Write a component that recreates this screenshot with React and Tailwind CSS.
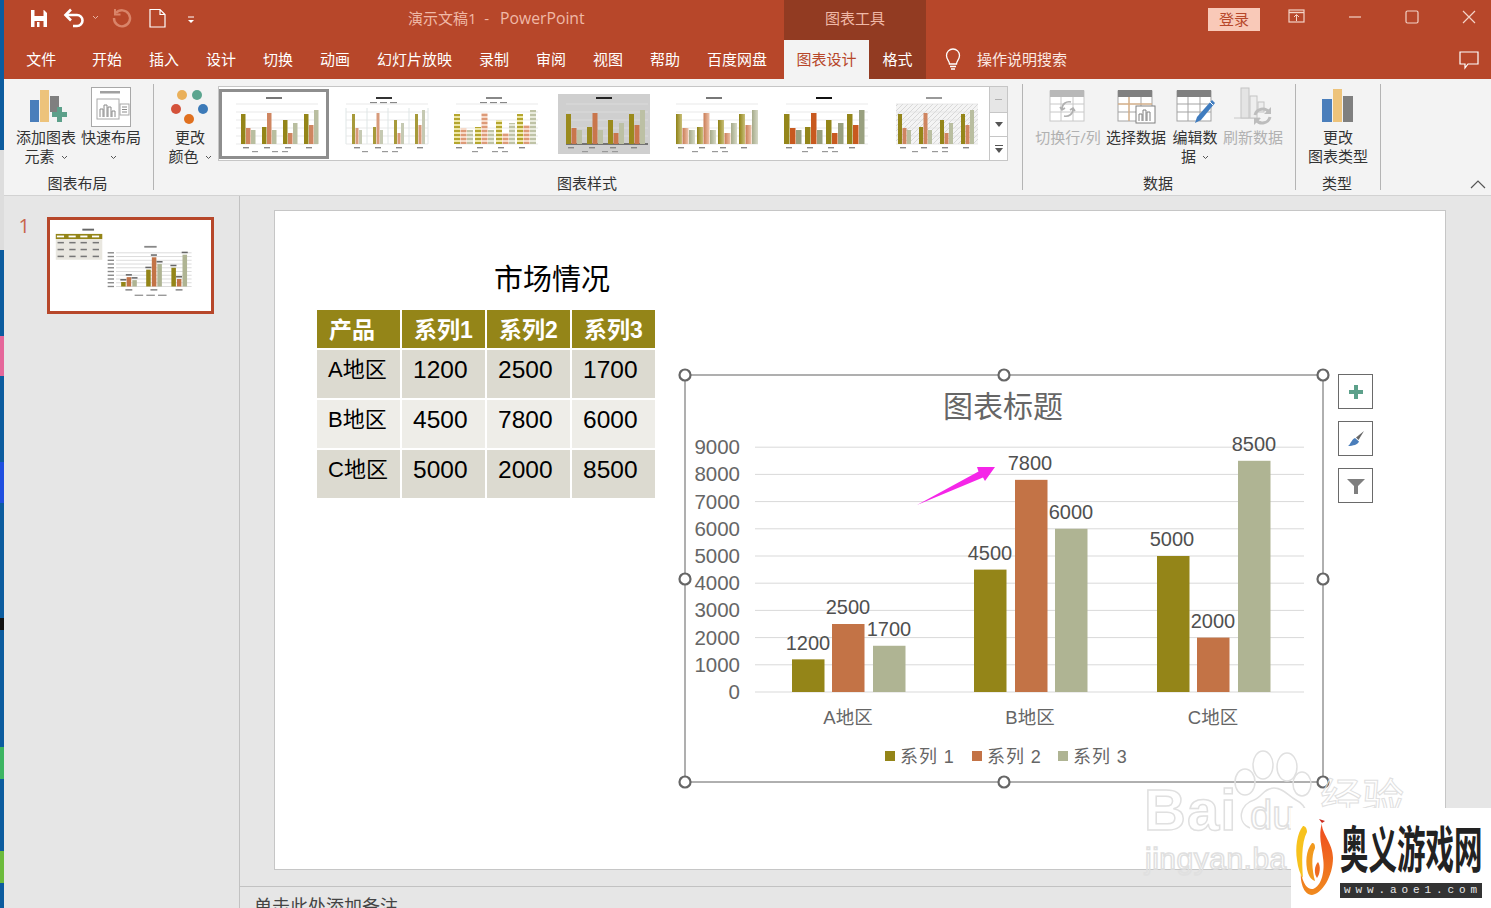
import React from "react";

const OLIVE = "#948518";
const RUST = "#c37346";
const SAGE = "#afb493";

const TABS = [
  { label: "开始", w: "w-[57px]" },
  { label: "插入", w: "w-[57px]" },
  { label: "设计", w: "w-[57px]" },
  { label: "切换", w: "w-[57px]" },
  { label: "动画", w: "w-[57px]" },
  { label: "幻灯片放映", w: "w-[102px]" },
  { label: "录制", w: "w-[57px]" },
  { label: "审阅", w: "w-[57px]" },
  { label: "视图", w: "w-[57px]" },
  { label: "帮助", w: "w-[57px]" },
  { label: "百度网盘", w: "w-[87px]" },
];

const TABLE = [
  ["A地区", "1200", "2500", "1700"],
  ["B地区", "4500", "7800", "6000"],
  ["C地区", "5000", "2000", "8500"],
];

// x of each bar in slide pixels
const BARS = [
  { x: 792, v: 1200, c: OLIVE, lx: 808, ly: 650 },
  { x: 832, v: 2500, c: RUST, lx: 848, ly: 614 },
  { x: 873, v: 1700, c: SAGE, lx: 889, ly: 636 },
  { x: 974, v: 4500, c: OLIVE, lx: 990, ly: 560 },
  { x: 1015, v: 7800, c: RUST, lx: 1030, ly: 470 },
  { x: 1055, v: 6000, c: SAGE, lx: 1071, ly: 519 },
  { x: 1157, v: 5000, c: OLIVE, lx: 1172, ly: 546 },
  { x: 1197, v: 2000, c: RUST, lx: 1213, ly: 628 },
  { x: 1238, v: 8500, c: SAGE, lx: 1254, ly: 451 },
];
const TICKS = [9000, 8000, 7000, 6000, 5000, 4000, 3000, 2000, 1000, 0];
const valueY = (v) => 692 - v * 0.0272;

const HANDLES = [
  [685, 375], [1004, 375], [1323, 375], [685, 579],
  [1323, 579], [685, 782], [1004, 782], [1323, 782],
];

const STYLE_THUMBS = [
  { selected: true, colors: [OLIVE, "#cf8560", "#b9bea0"], w: 4.5, start: 13, title: "#777" },
  { colors: ["#a79a3a", "#d79a7a", "#c5c9b2"], w: 3, start: 14, title: "#333", columns: true, legend: true },
  { kind: "stripe", w: 6, start: 6, title: "#888", legend: true },
  { colors: ["#9a8a1d", "#c9764c", "#bcc0a4"], w: 5, start: 8, title: "#222", bg: "#cfcfcf", axis: "#555" },
  { kind: "grad", w: 6, start: 8, title: "#777" },
  { colors: ["#94861a", "#c8591f", "#99a07f"], w: 5.5, start: 6, title: "#111" },
  { colors: ["#94861a", "#cf8560", "#b9bea0"], w: 4, start: 10, title: "#999", hatch: true },
];
const THUMB_H = [
  [30, 16, 14],
  [17, 31, 14],
  [24, 11, 21],
  [30, 19, 34],
];

function thumbFill(t, b, id) {
  if (t.kind === "stripe") {
    return [`url(#stripeA${id})`, `url(#stripeB${id})`, `url(#stripeC${id})`][b];
  }
  if (t.kind === "grad") {
    return [`url(#gradA${id})`, `url(#gradB${id})`, `url(#gradC${id})`][b];
  }
  return t.colors[b];
}

function StyleThumb({ t, id }) {
  return (
    <div
      className={[
        "w-[110px] h-[70px] flex items-center justify-center",
        t.selected ? "border-[3px] border-[#8e8e8e]" : "",
      ].join(" ")}
    >
      <svg width="92" height="60" viewBox="0 0 92 60">
        <defs>
          {[["A", "#b5a62e", "#eee7a8"], ["B", "#dd9a78", "#f6d9c8"], ["C", "#bfc3a6", "#e8eadc"]].map(([k, a, b]) => (
            <pattern key={k} id={`stripe${k}${id}`} width="4" height="4" patternUnits="userSpaceOnUse">
              <rect width="4" height="2" fill={a} />
              <rect y="2" width="4" height="2" fill={b} />
            </pattern>
          ))}
          {[["A", "#8f8216", "#c9c07a"], ["B", "#c97c55", "#eec3ab"], ["C", "#a5aa8a", "#d6d9c6"]].map(([k, a, b]) => (
            <linearGradient key={k} id={`grad${k}${id}`} x1="0" x2="1" y1="0" y2="0">
              <stop offset="0" stopColor={a} />
              <stop offset="1" stopColor={b} />
            </linearGradient>
          ))}
          <pattern id={`hatch${id}`} width="5" height="5" patternUnits="userSpaceOnUse">
            <rect width="5" height="5" fill="#f4f4f4" />
            <path d="M0 5L5 0" stroke="#d8d8d8" strokeWidth="1" />
          </pattern>
        </defs>
        <rect width="92" height="60" fill={t.bg || "#fff"} />
        {t.hatch && <rect x="8" y="10" width="82" height="40" fill={`url(#hatch${id})`} />}
        <rect x="38" y="3" width="16" height="2" fill={t.title} />
        {t.legend && [32, 42, 52].map((x) => <rect key={x} x={x} y="8" width="7" height="1.2" fill="#888" />)}
        {[10, 18, 26, 34, 42, 50].map((y) => (
          <line
            key={y}
            x1="8"
            x2="90"
            y1={y}
            y2={y}
            stroke={t.axis && y === 50 ? t.axis : "#e0e0e0"}
            strokeWidth={t.axis && y === 50 ? 1.5 : 0.7}
          />
        ))}
        {t.columns && [8, 29, 50, 71, 90].map((x) => (
          <line key={x} x1={x} x2={x} y1="14" y2="50" stroke="#dfe6e6" strokeWidth="1" />
        ))}
        {THUMB_H.map((group, g) =>
          group.map((h, b) => (
            <rect
              key={`${g}-${b}`}
              x={t.start + g * 21 + b * (t.w + 0.5)}
              y={50 - h}
              width={t.w}
              height={h}
              fill={thumbFill(t, b, id)}
            />
          ))
        )}
        {[0, 1, 2, 3].map((g) => (
          <rect key={g} x={t.start + 2 + g * 21} y="53" width="6" height="1.4" fill="#888" />
        ))}
        {[24, 44, 54].map((x) => <rect key={x} x={x} y="57" width="6" height="1.2" fill="#999" />)}
      </svg>
    </div>
  );
}

function RibbonButton({ w, disabled, icon, children }) {
  return (
    <div className={`${w} shrink-0 flex flex-col items-center pt-[7px]`}>
      <div className="h-[42px] w-full flex items-start justify-center">{icon}</div>
      <div
        className={`text-[15px] leading-[19px] text-center whitespace-nowrap ${
          disabled ? "text-[#b1b1b1]" : "text-[#333333]"
        }`}
      >
        {children}
      </div>
    </div>
  );
}

const Caret = () => (
  <svg width="7" height="5" viewBox="0 0 7 5" className="inline-block ml-[6px] align-middle">
    <path d="M1 1l2.5 2.5L6 1" fill="none" stroke="#555" strokeWidth="1" />
  </svg>
);

function GroupLabel({ children }) {
  return <div className="h-[18px] pr-[2px] text-[15px] leading-[18px] text-center text-[#333333]">{children}</div>;
}

const Divider = () => <div className="w-px my-[5px] bg-[#b4b4b4] shrink-0" />;

function BarsIcon() {
  return (
    <svg width="40" height="40" viewBox="0 0 40 40">
      <rect x="1" y="13" width="9" height="22" fill="#4a7ebb" />
      <rect x="11" y="3" width="9" height="32" fill="#edc37b" />
      <rect x="21" y="9" width="9" height="16" fill="#7f7f7f" />
      <path d="M24 24h5v-5h5v5h5v5h-5v5h-5v-5h-5z" fill="#5ca08a" transform="translate(-1 1)" />
    </svg>
  );
}

function QuickLayoutIcon() {
  return (
    <svg width="42" height="42" viewBox="0 0 42 42">
      <rect x="1.5" y="1.5" width="39" height="39" fill="#fff" stroke="#a8a8a8" />
      <rect x="10" y="5" width="20" height="2.5" fill="#a0a0a0" />
      <rect x="7" y="13" width="22" height="20" fill="#fff" stroke="#a8a8a8" />
      <path d="M10 31V23h3v8M14 31V19h3v12M18 31V21h3v10M22 31v-6h3v6" fill="#fff" stroke="#8a8a8a" />
      <rect x="30" y="18" width="9" height="11" fill="#fff" stroke="#a8a8a8" />
      <path d="M32 21h5M32 23.5h5M32 26h5" stroke="#8a8a8a" />
    </svg>
  );
}

function ColorsIcon() {
  return (
    <svg width="40" height="40" viewBox="0 0 40 40">
      <circle cx="12" cy="8" r="5" fill="#eab05a" />
      <circle cx="27" cy="8" r="5" fill="#5ba58f" />
      <circle cx="6" cy="22" r="5" fill="#d4523a" />
      <circle cx="33" cy="22" r="5" fill="#3c7ab8" />
      <circle cx="19" cy="32" r="5" fill="#e0701f" />
    </svg>
  );
}

function GridIcon({ tone, header, children }) {
  return (
    <svg width="42" height="40" viewBox="0 0 42 40">
      <rect x="3" y="5" width="34" height="30" fill="#fff" stroke={tone} />
      <rect x="3" y="4" width="34" height="7" fill={header} />
      <path d="M14 11v24M26 11v24M3 18h34M3 26h34" stroke={tone} strokeWidth="1" />
      {children}
    </svg>
  );
}

function SwitchIcon() {
  return (
    <GridIcon tone="#c8c8c8" header="#b8b8b8">
      <path d="M24 16c-5-1-9 2-9 7M13 21l2 3 3-2M17 30c5 1 9-2 9-7M28 25l-2-3-3 2" fill="none" stroke="#b0b0b0" strokeWidth="1.6" />
    </GridIcon>
  );
}

function SelectIcon() {
  return (
    <GridIcon tone="#a3a3a3" header="#808080">
      <path d="M14 11v24M3 18h34" stroke="#e8b27a" strokeWidth="1" />
      <rect x="21" y="20" width="19" height="17" fill="#fff" stroke="#808080" />
      <path d="M24 35v-7h3v7M28 35V24h3v11M32 35v-9h3v9" fill="#fff" stroke="#808080" />
    </GridIcon>
  );
}

function EditIcon() {
  return (
    <GridIcon tone="#a3a3a3" header="#808080">
      <path d="M38 14l3 3-14 17-6 3 2-6z" fill="#3f7cbf" />
      <path d="M36 16l3 3" stroke="#fff" strokeWidth="1" />
    </GridIcon>
  );
}

function RefreshIcon() {
  return (
    <svg width="42" height="40" viewBox="0 0 42 40">
      <path d="M2 32h26" stroke="#c8c8c8" />
      <rect x="9" y="2" width="8" height="30" fill="#e4e4e4" stroke="#c4c4c4" />
      <rect x="18" y="10" width="7" height="22" fill="#eeeeee" stroke="#c4c4c4" />
      <rect x="26" y="16" width="6" height="10" fill="#eeeeee" stroke="#c4c4c4" />
      <path d="M23 29a8 8 0 0 1 14-3M38 31a8 8 0 0 1-14 3" fill="none" stroke="#bdbdbd" strokeWidth="3" />
      <path d="M39 21v7h-7zM22 39v-7h7z" fill="#bdbdbd" />
    </svg>
  );
}

function ChartTypeIcon() {
  return (
    <svg width="34" height="36" viewBox="0 0 34 36">
      <rect x="1" y="11" width="10" height="23" fill="#4a7ebb" />
      <rect x="12" y="1" width="9" height="33" fill="#edc37b" />
      <rect x="22" y="8" width="10" height="26" fill="#7f7f7f" />
    </svg>
  );
}

function TitleBar() {
  return (
    <div className="h-10 flex items-start text-[15px] relative shrink-0">
      <div className="w-[780px] h-10 flex items-center">
        <svg width="205" height="24" viewBox="0 0 205 24" className="ml-[20px] mb-[4px] shrink-0">
          {/* save */}
          <path d="M7 4h13l3 3v14H7z" fill="#fff" />
          <rect x="10.5" y="4" width="9" height="6" fill="#b7472a" />
          <rect x="10.5" y="15" width="9" height="6" fill="#b7472a" />
          <rect x="13" y="16" width="2.5" height="5" fill="#fff" />
          {/* undo */}
          <path d="M43 9h10a5.5 5.5 0 0 1 0 11h-4" fill="none" stroke="#fff" strokeWidth="2.6" />
          <path d="M47 3.5L41.5 9l5.5 5.5" fill="none" stroke="#fff" strokeWidth="2.6" />
          <path d="M69 10l2.5 2.5L74 10" fill="none" stroke="#e9b3a2" strokeWidth="1" />
          {/* redo, disabled */}
          <path d="M92 7A8 8 0 1 1 90 12" fill="none" stroke="#d98469" strokeWidth="2.4" />
          <path d="M91 3v5.500h5.500" fill="none" stroke="#d98469" strokeWidth="2" />
          {/* new */}
          <path d="M126 3.500h10l5 5V21h-15zM136 3.500v5h5" fill="none" stroke="#fff" strokeWidth="1.2" />
          {/* customize */}
          <path d="M164 11h6" stroke="#fff" strokeWidth="1" />
          <path d="M164 14h6l-3 3z" fill="#fff" />
        </svg>
        <div className="ml-[179px] mb-[2px] whitespace-nowrap text-[#f0b9a7]">
          演示文稿1&nbsp; -&nbsp; <span className="ml-[3px] text-[15.750px]">PowerPoint</span>
        </div>
      </div>
      <div className="w-[142px] h-10 bg-[#923b22] text-[#f0b9a7] flex items-center justify-center pb-[3px]">图表工具</div>
      <div className="ml-[282px] mt-2 w-[52px] h-[23px] bg-[#f9c9b8] text-[#b7472a] flex items-center justify-center">登录</div>
      <svg width="231" height="24" viewBox="0 0 231 24" className="mt-[5px]">
        <rect x="29" y="5" width="15" height="12" fill="none" stroke="#f4d3c7" strokeWidth="1.2" />
        <path d="M29 7.5h15" stroke="#f4d3c7" strokeWidth="1.4" />
        <path d="M36.5 16v-6M34 12l2.5-2.5L39 12" fill="none" stroke="#f4d3c7" />
        <path d="M89 12h12" stroke="#f4d3c7" strokeWidth="1.2" />
        <rect x="146" y="6" width="12" height="12" rx="1.5" fill="none" stroke="#f4d3c7" strokeWidth="1.2" />
        <path d="M203 6l12 12M215 6l-12 12" stroke="#f4d3c7" strokeWidth="1.2" />
      </svg>
    </div>
  );
}

function TabBar() {
  return (
    <div className="h-[39px] flex items-stretch text-[15px] text-white shrink-0">
      <div className="w-[74.5px] flex items-center justify-center">文件</div>
      {TABS.map((t) => (
        <div key={t.label} className={`${t.w} flex items-center justify-center`}>
          {t.label}
        </div>
      ))}
      <div className="w-[3.5px]" />
      <div className="w-[85px] bg-[#f3f3f3] text-[#b7472a] flex items-center justify-center">图表设计</div>
      <div className="w-[57px] bg-[#923b22] flex items-center justify-center">格式</div>
      <div className="flex items-center ml-[17px] text-[#fbe9e3]">
        <svg width="20" height="24" viewBox="0 0 20 24" className="mr-[14px]">
          <path d="M6.5 16c0-3-3-4.500-3-8.500a6.500 6.500 0 0 1 13 0c0 4-3 5.500-3 8.500z" fill="none" stroke="#fff" strokeWidth="1.3" />
          <path d="M7 18.500h6M8 21h4" stroke="#fff" strokeWidth="1.3" />
        </svg>
        操作说明搜索
      </div>
      <svg width="22" height="22" viewBox="0 0 22 22" className="ml-auto mr-[11px] self-center">
        <path d="M2 3h18v12H10l-3 4v-4H2z" fill="none" stroke="#fff" strokeWidth="1.2" />
      </svg>
    </div>
  );
}

function Gallery() {
  return (
    <div className="w-[790px] h-[75px] mt-[7px] bg-white border border-[#c6c6c6] flex items-center shrink-0">
      <div className="flex w-[770px] shrink-0">
        {STYLE_THUMBS.map((t, i) => (
          <StyleThumb key={i} t={t} id={i} />
        ))}
      </div>
      <div className="w-[18px] h-full flex flex-col border-l border-[#c6c6c6] ml-auto">
        <div className="h-[26px] bg-[#e6e6e6] border-b border-[#c6c6c6] flex items-center justify-center">
          <div className="w-[7px] h-px bg-[#b0b0b0]" />
        </div>
        <div className="h-[24px] border-b border-[#c6c6c6] flex items-center justify-center">
          <svg width="8" height="5"><path d="M0 0h8L4 5z" fill="#555" /></svg>
        </div>
        <div className="flex-1 flex flex-col items-center justify-center gap-[2px]">
          <div className="w-[8px] h-px bg-[#555]" />
          <svg width="8" height="5"><path d="M0 0h8L4 5z" fill="#555" /></svg>
        </div>
      </div>
    </div>
  );
}

function Ribbon() {
  return (
    <div className="h-[117px] bg-[#f3f3f3] border-b border-[#d2d2d2] flex text-[#333333] relative shrink-0">
      {/* 图表布局 */}
      <div className="w-[149px] flex flex-col shrink-0">
        <div className="h-[95px] flex pl-[10px]">
          <RibbonButton w="w-[64px]" icon={<div className="mt-[1px] ml-[6px]"><BarsIcon /></div>}>
            添加图表<br />元素<Caret />
          </RibbonButton>
          <RibbonButton w="w-[66px]" icon={<QuickLayoutIcon />}>
            快速布局<br /><Caret />
          </RibbonButton>
        </div>
        <GroupLabel>图表布局</GroupLabel>
      </div>
      <Divider />
      {/* 图表样式 */}
      <div className="w-[868px] flex flex-col shrink-0">
        <div className="h-[95px] flex">
          <div className="w-[8px]" />
          <RibbonButton w="w-[56px]" icon={<div className="mt-[1px]"><ColorsIcon /></div>}>
            更改<br />颜色<Caret />
          </RibbonButton>
          <Gallery />
        </div>
        <GroupLabel>图表样式</GroupLabel>
      </div>
      <Divider />
      {/* 数据 */}
      <div className="w-[272px] flex flex-col shrink-0">
        <div className="h-[95px] flex pl-[11px]">
          <RibbonButton w="w-[68px]" disabled icon={<SwitchIcon />}>切换行/列</RibbonButton>
          <RibbonButton w="w-[68px]" icon={<SelectIcon />}>选择数据</RibbonButton>
          <RibbonButton w="w-[50px]" icon={<EditIcon />}>编辑数<br />据<Caret /></RibbonButton>
          <RibbonButton w="w-[66px]" disabled icon={<RefreshIcon />}>刷新数据</RibbonButton>
        </div>
        <GroupLabel>数据</GroupLabel>
      </div>
      <Divider />
      {/* 类型 */}
      <div className="w-[84px] flex flex-col shrink-0">
        <div className="h-[95px] flex">
          <RibbonButton w="w-[84px]" icon={<div className="mt-[2px]"><ChartTypeIcon /></div>}>
            更改<br />图表类型
          </RibbonButton>
        </div>
        <GroupLabel>类型</GroupLabel>
      </div>
      <Divider />
      <svg width="16" height="9" viewBox="0 0 16 9" className="absolute right-[5px] top-[101px]">
        <path d="M1 8l7-7 7 7" fill="none" stroke="#555" strokeWidth="1.2" />
      </svg>
    </div>
  );
}

function MiniSlide() {
  return (
    <svg width="161" height="91" viewBox="275 210 1170 659" className="block">
      <rect x="275" y="210" width="1170" height="659" fill="#fff" />
      <rect x="510" y="272" width="85" height="14" fill="#666" />
      <rect x="317" y="310" width="338" height="38" fill={OLIVE} />
      {[340, 425, 510, 595].map((x) => (
        <rect key={x} x={x - 15} y="322" width="52" height="13" fill="#fff" />
      ))}
      <rect x="317" y="350" width="338" height="148" fill="#e9e7e0" />
      {[374, 424, 474].map((y) =>
        [330, 415, 497, 585].map((x) => <rect key={x} x={x} y={y - 6} width="46" height="11" fill="#777" />)
      )}
      <rect x="960" y="397" width="90" height="13" fill="#888" />
      {TICKS.map((t) => (
        <g key={t}>
          <line x1="755" x2="1304" y1={valueY(t)} y2={valueY(t)} stroke="#d4d4d4" strokeWidth="6" />
          <rect x="694" y={valueY(t) - 5} width="46" height="10" fill="#888" />
        </g>
      ))}
      {BARS.map((b) => (
        <g key={b.x}>
          <rect x={b.x} y={valueY(b.v)} width="33" height={692 - valueY(b.v)} fill={b.c} />
          <rect x={b.lx - 22} y={b.ly - 12} width="44" height="11" fill="#666" />
        </g>
      ))}
      {[848, 1030, 1213].map((x) => <rect key={x} x={x - 25} y="711" width="50" height="11" fill="#888" />)}
      {[890, 975, 1060].map((x) => <rect key={x} x={x} y="751" width="62" height="10" fill="#999" />)}
    </svg>
  );
}

function Chart() {
  return (
    <svg width="664" height="432" viewBox="672 362 664 432" className="absolute left-[397px] top-[151px]">
      <rect x="685" y="375" width="638" height="407" fill="#fff" stroke="#606060" strokeWidth="1" />
      <text x="1003" y="417" textAnchor="middle" fontSize="30" fill="#666666">图表标题</text>
      {TICKS.map((t) => (
        <g key={t}>
          <line x1="755" x2="1304" y1={valueY(t)} y2={valueY(t)} stroke="#d9d9d9" />
          <text x="740" y={valueY(t) + 7} textAnchor="end" fontSize="20.500" fill="#666666">{t}</text>
        </g>
      ))}
      {BARS.map((b) => (
        <g key={b.x}>
          <rect x={b.x} y={valueY(b.v)} width="32.500" height={692 - valueY(b.v)} fill={b.c} />
          <text x={b.lx} y={b.ly} textAnchor="middle" fontSize="20" fill="#505050">{b.v}</text>
        </g>
      ))}
      {[["A地区", 848], ["B地区", 1030], ["C地区", 1213]].map(([label, x]) => (
        <text key={label} x={x} y="724" textAnchor="middle" fontSize="18.500" fill="#666666">{label}</text>
      ))}
      {[[885, OLIVE, "系列 1"], [972, RUST, "系列 2"], [1058, SAGE, "系列 3"]].map(([x, c, label]) => (
        <g key={label}>
          <rect x={x} y="751" width="10" height="10" fill={c} />
          <text x={x + 15} y="763" fontSize="18" fill="#666666" letterSpacing="0.900">{label}</text>
        </g>
      ))}
      {/* pink annotation arrow */}
      <polygon points="917,505 978.500,471.500 977,467 995,467 985,481 983,477.500" fill="#f526e8" />
      {HANDLES.map(([x, y]) => (
        <circle key={`${x}-${y}`} cx={x} cy={y} r="5.500" fill="#fff" stroke="#666666" strokeWidth="2.200" />
      ))}
    </svg>
  );
}

function ChartTool({ children }) {
  return (
    <div className="w-[35px] h-[35px] bg-white border border-[#6a6a6a] flex items-center justify-center">{children}</div>
  );
}

function Slide() {
  return (
    <div className="w-[1172px] h-[660px] bg-white border border-[#c6c6c6] relative font-['Liberation_Sans','Noto_Sans_CJK_SC',sans-serif] text-black">
      <div className="absolute left-[219px] top-[50px] text-[29px] leading-[38px]">市场情况</div>
      <div className="absolute left-[42px] top-[99px] w-[338px] grid grid-cols-4 gap-[2px]">
        {["产品", "系列1", "系列2", "系列3"].map((h) => (
          <div key={h} className="h-[38px] bg-[#948518] text-white text-[23px] font-bold pl-[12px] pt-[1px] leading-[38px]">{h}</div>
        ))}
        {TABLE.map((row, r) =>
          row.map((cell, c) => (
            <div
              key={`${r}-${cell}`}
              className={`h-[48px] pl-[11px] pt-[3px] leading-[33px] ${c === 0 ? "text-[22px]" : "text-[24.500px]"} ${
                r === 1 ? "bg-[#eeede8]" : "bg-[#dcdad0]"
              }`}
            >
              {cell}
            </div>
          ))
        )}
      </div>
      <Chart />
      <div className="absolute left-[1063px] top-[163px] flex flex-col gap-[12px]">
        <ChartTool>
          <svg width="16" height="16" viewBox="0 0 16 16"><path d="M6 1h4v5h5v4h-5v5H6v-5H1V6h5z" fill="#5ca08a" /></svg>
        </ChartTool>
        <ChartTool>
          <svg width="20" height="20" viewBox="0 0 20 20">
            <path d="M18 2l-8 6.500 2.500 2.500z" fill="#666" />
            <path d="M9 9l4 3.500c-1 3-6 4.500-11 4.500 3-2 3-6 7-8z" fill="#4a7ebb" />
          </svg>
        </ChartTool>
        <ChartTool>
          <svg width="20" height="20" viewBox="0 0 20 20"><path d="M1 3h18l-7 7v8H8v-8z" fill="#7f7f7f" /></svg>
        </ChartTool>
      </div>
    </div>
  );
}

function Watermark() {
  return (
    <svg
      width="280"
      height="150"
      viewBox="1135 745 280 150"
      className="absolute left-[1135px] top-[745px] pointer-events-none font-['Liberation_Sans','Noto_Sans_CJK_SC',sans-serif]"
    >
      <g fill="none" stroke="#e0e0e0" strokeWidth="1.500">
        <ellipse cx="1263" cy="765" rx="10" ry="14" />
        <ellipse cx="1287" cy="767" rx="10" ry="14" />
        <ellipse cx="1245" cy="782" rx="10" ry="13" />
        <ellipse cx="1302" cy="784" rx="9" ry="12" />
        <path d="M1250 828c-14-6-10-24 4-28 8-3 10-12 20-12s14 8 22 12c12 6 14 20 4 26" />
        <text x="1144" y="830" fontSize="58" fontWeight="700" letterSpacing="1">Bai</text>
        <text x="1250" y="829" fontSize="40">du</text>
        <text x="1320" y="814" fontSize="42" strokeWidth="1">经验</text>
        <text x="1145" y="869" fontSize="30" letterSpacing="0.500">jingyan.ba</text>
      </g>
    </svg>
  );
}

function SiteLogo() {
  return (
    <div className="absolute right-0 bottom-0 w-[200px] h-[100px] bg-white font-['Noto_Sans_CJK_SC',sans-serif] overflow-hidden">
      <svg width="40" height="78" viewBox="0 0 40 78" className="absolute left-[4px] top-[10px]">
        <defs>
          <linearGradient id="flame" x1="0" x2="0" y1="0" y2="1">
            <stop offset="0" stopColor="#ef4a1f" />
            <stop offset="1" stopColor="#f08a1e" />
          </linearGradient>
        </defs>
        <path d="M24 1l6 2-3 2z" fill="#c9281c" />
        <path d="M27 5C26 15 38 25 38 40 38 58 27 76 17 77 8 77 5 62 6 55 8 66 13 72 18 71 27 68 30 52 28 40 27 28 23 18 27 5z" fill="url(#flame)" />
        <path d="M8 8C2 15 0 30 2 42 3 50 5 56 8 60 7 45 6 25 12 14 12 10 10 8 8 8z" fill="#f7c21d" />
        <path d="M17 25C11 32 10 45 13 55 15 60 17 62 20 63 17 52 16 38 20 30 20 26 19 25 17 25z" fill="#f29a1e" />
        <path d="M23 44C19 48 19 56 22 60 25 56 26 48 23 44z" fill="#ee6a1f" />
      </svg>
      <div className="absolute left-[49px] top-[9px] text-[28.500px] leading-[34px] font-bold text-[#222222] whitespace-nowrap origin-top-left scale-y-[1.75]">
        奥义游戏网
      </div>
      <div className="absolute left-[49px] top-[75px] w-[142px] h-[15px] bg-[#333333] text-[#e8e8e8] text-[11px] leading-[15px] pl-[4px] tracking-[4.900px] font-['Liberation_Mono',monospace] whitespace-nowrap overflow-hidden">
        www.aoe1.com
      </div>
    </div>
  );
}

export default function App() {
  return (
    <div className="w-[1491px] h-[908px] relative overflow-hidden flex bg-[#e6e6e6] font-['Open_Sans','Noto_Sans_CJK_SC',sans-serif]">
      {/* Desktop behind the window */}
      <div className="w-1 h-full bg-[#0c5c9f] shrink-0 flex flex-col">
        <div className="h-[150px]" />
        <div className="h-[100px] bg-[#dddddd]" />
        <div className="h-[86px]" />
        <div className="h-[40px] bg-[#e5679a]" />
        <div className="h-[86px]" />
        <div className="h-[41px] bg-[#1f4fe0]" />
        <div className="h-[115px]" />
        <div className="h-[12px] bg-[#111111]" />
        <div className="h-[117px]" />
        <div className="h-[32px] bg-[#3db562]" />
        <div className="h-[72px]" />
        <div className="h-[32px] bg-[#6cbb3c]" />
      </div>

      <div className="flex-1 flex flex-col min-w-0">
        <div className="bg-[#b7472a] shrink-0">
          <TitleBar />
          <TabBar />
        </div>
        <Ribbon />

        <div className="flex-1 flex min-h-0">
          {/* Thumbnail pane */}
          <div className="w-[236px] shrink-0 border-r border-[#c2c2c2] pt-[21px] flex items-start">
            <div className="w-[43px] text-right pr-[17px] text-[20px] leading-[18px] text-[#c8654a]">1</div>
            <div className="border-[3px] border-[#b7472a] bg-white">
              <MiniSlide />
            </div>
          </div>
          {/* Editor */}
          <div className="flex-1 flex flex-col min-w-0">
            <div className="h-[690px] pl-[34px] pt-[14px] shrink-0">
              <Slide />
            </div>
            <div className="flex-1 border-t border-[#c2c2c2] pl-[14px] pt-[8px] text-[18px] leading-[22px] text-[#444444] whitespace-nowrap">
              单击此处添加备注
            </div>
          </div>
        </div>
      </div>

      <Watermark />
      <SiteLogo />
    </div>
  );
}
